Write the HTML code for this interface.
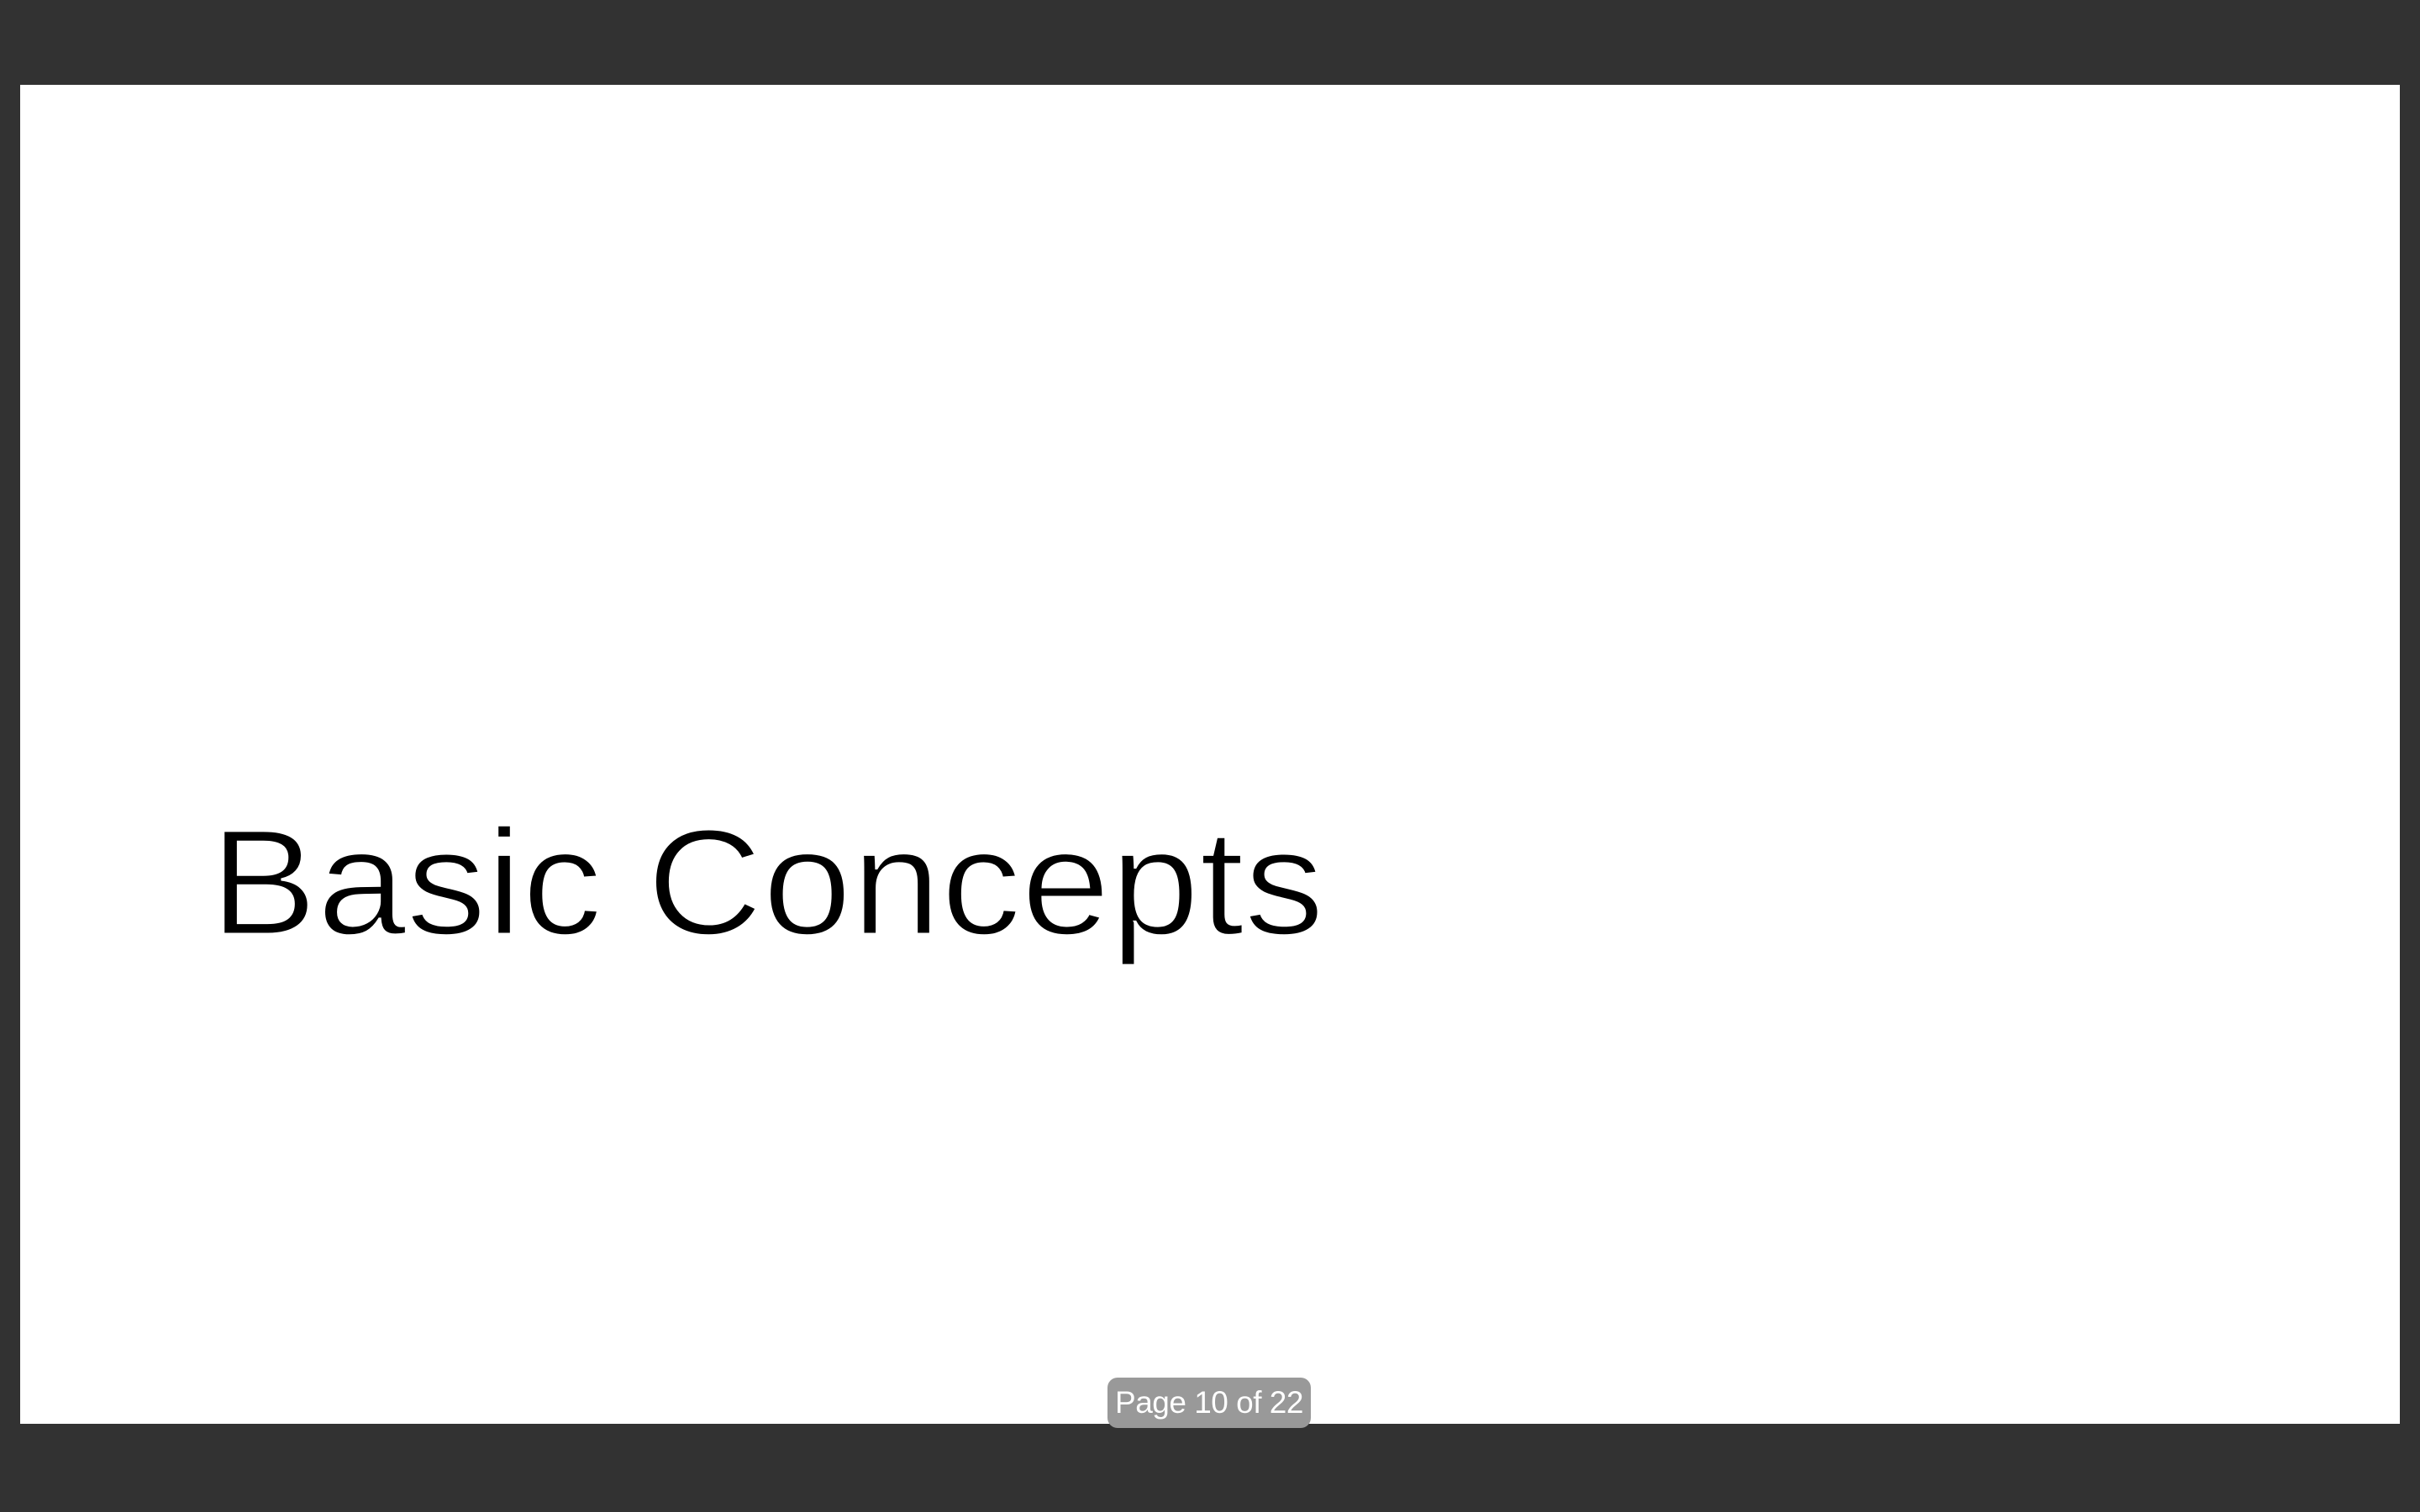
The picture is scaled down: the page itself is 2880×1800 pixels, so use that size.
<!DOCTYPE html>
<html><head><style>
html,body{margin:0;padding:0;width:2880px;height:1800px;background:#323232;overflow:hidden}
.page{position:absolute;left:24px;top:101px;width:2832px;height:1594px;background:#fff}
.badge{position:absolute;left:1318px;top:1640px;width:242px;height:60px;background:#999;border-radius:12px;color:#fff;font:37px "Liberation Sans",sans-serif;line-height:60px;text-align:center;letter-spacing:-0.5px}
svg{position:absolute;left:0;top:0}
</style></head><body>
<div class="page"></div>
<svg width="2880" height="1800"><text x="250" y="1112" font-family="Liberation Sans, sans-serif" font-size="179" fill="#000" stroke="#fff" stroke-width="3" textLength="1326" lengthAdjust="spacingAndGlyphs">Basic Concepts</text></svg>
<div class="badge">Page 10 of 22</div>
</body></html>
